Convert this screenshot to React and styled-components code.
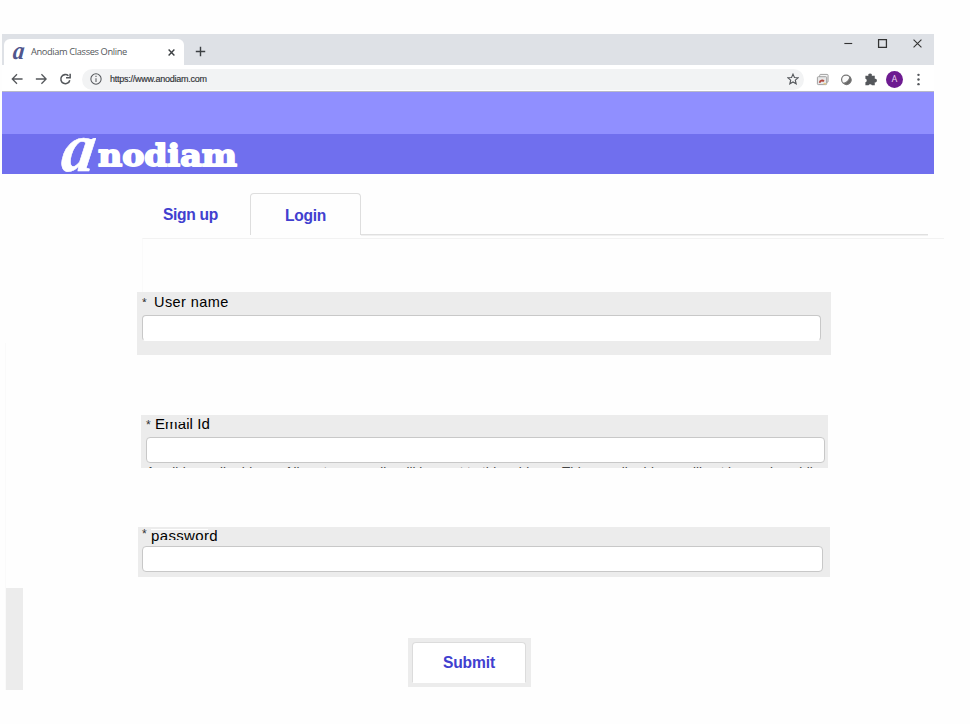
import React from "react";
import styled, { createGlobalStyle } from "styled-components";

const Global = createGlobalStyle`
  * { box-sizing: border-box; }
  body { margin: 0; background: #fff; font-family: "Liberation Sans", Arial, sans-serif; }
`;
const Page = styled.div`
  position: relative; width: 970px; height: 724px; padding: 34px 0 0 2px; overflow: hidden; background: #fefefe;
`;
const Browser = styled.div`width: 932px; height: 140px;`;
const TabStrip = styled.div`
  display: flex; height: 31px; background: #dee1e6;
`;
const BrowserTab = styled.div`
  display: flex; align-items: center; width: 180px; height: 27px; margin: 5px 0 0 2px; padding: 0 8px 1px 8px;
  background: #fff; border-radius: 6px 6px 0 0; color: #54575b;
`;
const Favicon = styled.span`
  width: 19px; font: italic bold 23px/20px "Liberation Serif", serif; color: #50568c;
  transform: translate(1px, -1px) skewX(-6deg) scaleY(1.1);
`;
const TabTitle = styled.span`
  flex: 1; font: 9.3px/14px "Open Sans", sans-serif; letter-spacing: -0.38px; white-space: nowrap;
`;
const NewTab = styled.div`display: flex; margin: 12px 0 0 11px;`;
const WindowButtons = styled.div`display: flex; gap: 24px; margin: 4px 11px 0 auto;`;
const AddressBar = styled.div`
  display: flex; align-items: center; height: 27px; padding: 2px 0 0 9px; background: #fff;
  border-bottom: 1px solid #b9bac8;
`;
const NavIcons = styled.div`display: flex; gap: 12px; width: 71px;`;
const Url = styled.div`
  display: flex; align-items: center; width: 722px; height: 21px; padding: 0 5px 0 8px; background: #f2f3f4;
  border-radius: 11px; font-size: 9px; color: #303236;
`;
const UrlText = styled.span`flex: 1; margin-left: 8px; -webkit-text-stroke: 0.15px; letter-spacing: -0.25px;`;
const Extensions = styled.div`display: flex; align-items: center; gap: 11px; margin-left: 12px;`;
const Avatar = styled.span`
  width: 17px; height: 17px; margin: 0 -2px; border-radius: 50%; background: #6d1b91; color: #e7d4ee;
  font: 9px/17px Roboto, sans-serif; text-align: center;
`;
const LightBand = styled.div`height: 42px; background: #908fff;`;
const DarkBand = styled.div`height: 40px; padding-left: 54px; background: #706fee;`;
const Logo = styled.svg`display: block; fill: #fff; stroke: #fff; stroke-linejoin: round;`;
const LogoInitial = styled.text`font: italic bold 68px "Liberation Serif", serif; stroke-width: 0.6px;`;
const LogoRest = styled.text`font: bold 30px "DejaVu Serif", serif; stroke-width: 1.8px;`;
const Tabs = styled.div`
  display: flex; height: 43px; margin: 19px 0 0 140px; width: 786px; font-weight: bold; font-size: 15.6px;
  letter-spacing: -0.3px; color: #4140cf;
`;
const Tab = styled.div`
  width: ${p => p.$active ? 111 : 108}px; text-align: center; line-height: 43px;
  padding-right: ${p => p.$active ? 0 : 11}px; height: 42px;
  ${p => p.$active && "border: 1px solid #dedede; border-bottom: 0; border-radius: 4px 4px 0 0;"}
`;
const TabLine = styled.div`
  flex: 1; height: 43px; background: linear-gradient(transparent 41px, #e0e0e0 41px, #e0e0e0 42px, #f0f0f0 42px);
`;
const FormEdge = styled.div`
  width: 802px; height: 54px; margin: 2px 0 0 140px; border-top: 1px solid #f2f2f2; border-left: 1px solid #fafafa;
`;
const Group = styled.div`
  width: ${p => p.$w}px; height: ${p => p.$h}px; margin: ${p => p.$top}px 0 0 ${p => p.$left - 2}px;
  padding: 0 ${p => p.$pr}px 0 ${p => p.$pl}px; background: #ececec; overflow: hidden;
`;
const Label = styled.label`
  display: flex; height: ${p => p.$h}px; padding-top: ${p => p.$pt}px; font-size: 15px; line-height: 17px; color: #000;
`;
const LabelText = styled.span`
  position: relative; height: 17px; font-size: ${p => p.$size || 15}px; letter-spacing: ${p => p.$ls || 0}px;
`;
const Seam = styled.i`
  position: absolute; left: ${p => p.$x}px; top: ${p => p.$y}px; width: ${p => p.$w}px; height: 1px;
  background: ${p => p.$white ? "#fff" : "#ececec"};
`;
const Star = styled.span`
  width: ${p => p.$w}px; height: 17px; font-size: 12px; transform: translateY(${p => p.$y}px); color: #333;
  ${p => p.$cut && "clip-path: inset(0 0 10px 0);"}
`;
const Input = styled.input`
  display: block; width: 100%; height: 26px; border: 1px solid #c8c8c8; border-radius: 4px;
  background: #fff; outline: none; ${p => p.$flat && "border-bottom-color: #fff;"}
`;
const Hint = styled.div`
  margin-top: 1px; font-size: 13.48px; line-height: 16px; color: #444; white-space: nowrap;
`;
const SubmitFrame = styled.div`
  width: 123px; height: 49px; margin: 61px 0 0 406px; padding: 4px; background: #ececec;
`;
const Submit = styled.button`
  display: block; width: 114px; height: 41px; padding: 0; border: 1px solid #dcdcdc; border-bottom-color: #fff;
  border-radius: 4px 4px 0 0; background: #fff; color: #4140cf; font: bold 15.6px "Liberation Sans", sans-serif;
  letter-spacing: -0.1px;
`;
const SideBlock = styled.div`
  position: absolute; left: 5px; top: 343px; width: 18px; height: 347px; border-left: 1px solid #fafafa;
  background: linear-gradient(#fefefe 245px, #ececec 245px);
`;

const Icon = ({ w = 13, d, sw = 1.5, color = "#54575b", children }) => (
  <svg width={w} height={w} viewBox="0 0 14 14" fill="none" stroke={color} strokeWidth={sw}>
    {d && <path d={d} />}{children}
  </svg>
);

export default function App() {
  return (
    <Page>
      <Global />
      <Browser>
        <TabStrip>
          <BrowserTab>
            <Favicon>a</Favicon><TabTitle>Anodiam Classes Online</TabTitle>
            <Icon w={9} sw={2.2} d="M2.5 2.5l9 9M11.5 2.5l-9 9" color="#3c4043" />
          </BrowserTab>
          <NewTab><Icon w={11} sw={1.8} d="M7 1v12M1 7h12" color="#3c4043" /></NewTab>
          <WindowButtons>
            <Icon w={11} sw={1.4} d="M3 7h10" color="#333" />
            <Icon w={11} sw={1.6} d="M2 2h10v10H2z" color="#333" />
            <Icon w={11} sw={1.4} d="M2 2l10 10M12 2L2 12" color="#333" />
          </WindowButtons>
        </TabStrip>
        <AddressBar>
          <NavIcons>
            <Icon w={12} d="M13.5 7H2M7 1.5L1.5 7 7 12.5" />
            <Icon w={12} d="M1 7h11.5M7.5 1.5L13 7 7.5 12.5" />
            <Icon w={12} sw={1.8} d="M12.6 8.4A5.3 5.3 0 1 1 11 3.2M13 0.8V5.5H8.2" />
          </NavIcons>
          <Url>
            <Icon w={12} sw={1.2}><circle cx="7" cy="7" r="6" /><path d="M7 6v4.5M7 3.2v1.5" /></Icon>
            <UrlText>https://www.anodiam.com</UrlText>
            <Icon w={12} sw={1.3} d="M7 1.3l1.7 3.9 4.2.4-3.2 2.8 1 4.2L7 10.4l-3.7 2.2 1-4.2L1.1 5.6l4.2-.4z" />
          </Url>
          <Extensions>
            <Icon w={13} sw={1} color="#999">
              <rect x="4" y="1.5" width="9" height="8.5" rx="1" fill="#f4f4f4" /><rect x="1.5" y="4" width="10" height="8.5" rx="1" fill="#e8e8e8" />
              <path d="M4 10.5a2.6 2.6 0 0 1 4.5-1.5" stroke="#b0453c" strokeWidth="2" /><path d="M8 11.5h3" stroke="#e8c98a" strokeWidth="1.6" />
            </Icon>
            <Icon w={13} sw={1.3} color="#777">
              <circle cx="6.5" cy="7" r="4.8" fill="#fafafa" />
              <path d="M10.8 4.5A4.8 4.8 0 0 1 4 11.2Q9.3 10 10.8 4.5z" fill="#666" />
            </Icon>
            <Icon w={13} sw={0}>
              <path fill="#54575b" d="M1.5 3h3.2a1.9 1.9 0 1 1 3.7 0h3.2v3.3a1.9 1.9 0 1 1 0 3.7v3.3H8.5a1.9 1.9 0 0 0-3.6 0H1.5V10a1.9 1.9 0 0 0 0-3.7z" />
            </Icon>
            <Avatar>A</Avatar>
            <Icon w={13} sw={0}><g fill="#54575b"><circle cx="7" cy="2" r="1.3" /><circle cx="7" cy="7" r="1.3" /><circle cx="7" cy="12" r="1.3" /></g></Icon>
          </Extensions>
        </AddressBar>
        <LightBand />
        <DarkBand>
          <Logo width="190" height="40" viewBox="0 0 190 40">
            <LogoInitial x="5" y="36" transform="translate(4.5 0) skewX(-9) scale(0.96 1.03)">a</LogoInitial>
            <LogoRest x="42" y="32" textLength="139" lengthAdjust="spacingAndGlyphs">nodiam</LogoRest>
          </Logo>
        </DarkBand>
      </Browser>
      <Tabs><Tab>Sign up</Tab><Tab $active>Login</Tab><TabLine /></Tabs>
      <FormEdge />
      <Group $left={137} $top={0} $w={694} $h={63} $pl={5} $pr={10}>
        <Label $h={23} $pt={2}>
          <Star $w={12} $y={1} $cut>*</Star><LabelText $size={14.5} $ls={0.42}>User name</LabelText>
        </Label>
        <Input $flat />
      </Group>
      <Group $left={141} $top={60} $w={687} $h={53} $pl={5} $pr={3}>
        <Label $h={22} $pt={0}>
          <Star $w={9} $y={2}>*</Star><LabelText $ls={0.1}>Email Id<Seam $x={11} $y={6} $w={24} /></LabelText>
        </Label>
        <Input />
        <Hint>A valid e-mail address. All system e-mails will be sent to this address. This e-mail address will not be made public</Hint>
      </Group>
      <Group $left={138} $top={59} $w={692} $h={50} $pl={4} $pr={7}>
        <Label $h={19} $pt={0}>
          <Star $w={9} $y={-1}>*</Star>
          <LabelText $ls={0.35}>password<Seam $white $x={0} $y={2} $w={57} /><Seam $x={9} $y={13} $w={48} /></LabelText>
        </Label>
        <Input />
      </Group>
      <SubmitFrame><Submit>Submit</Submit></SubmitFrame>
      <SideBlock />
    </Page>
  );
}
